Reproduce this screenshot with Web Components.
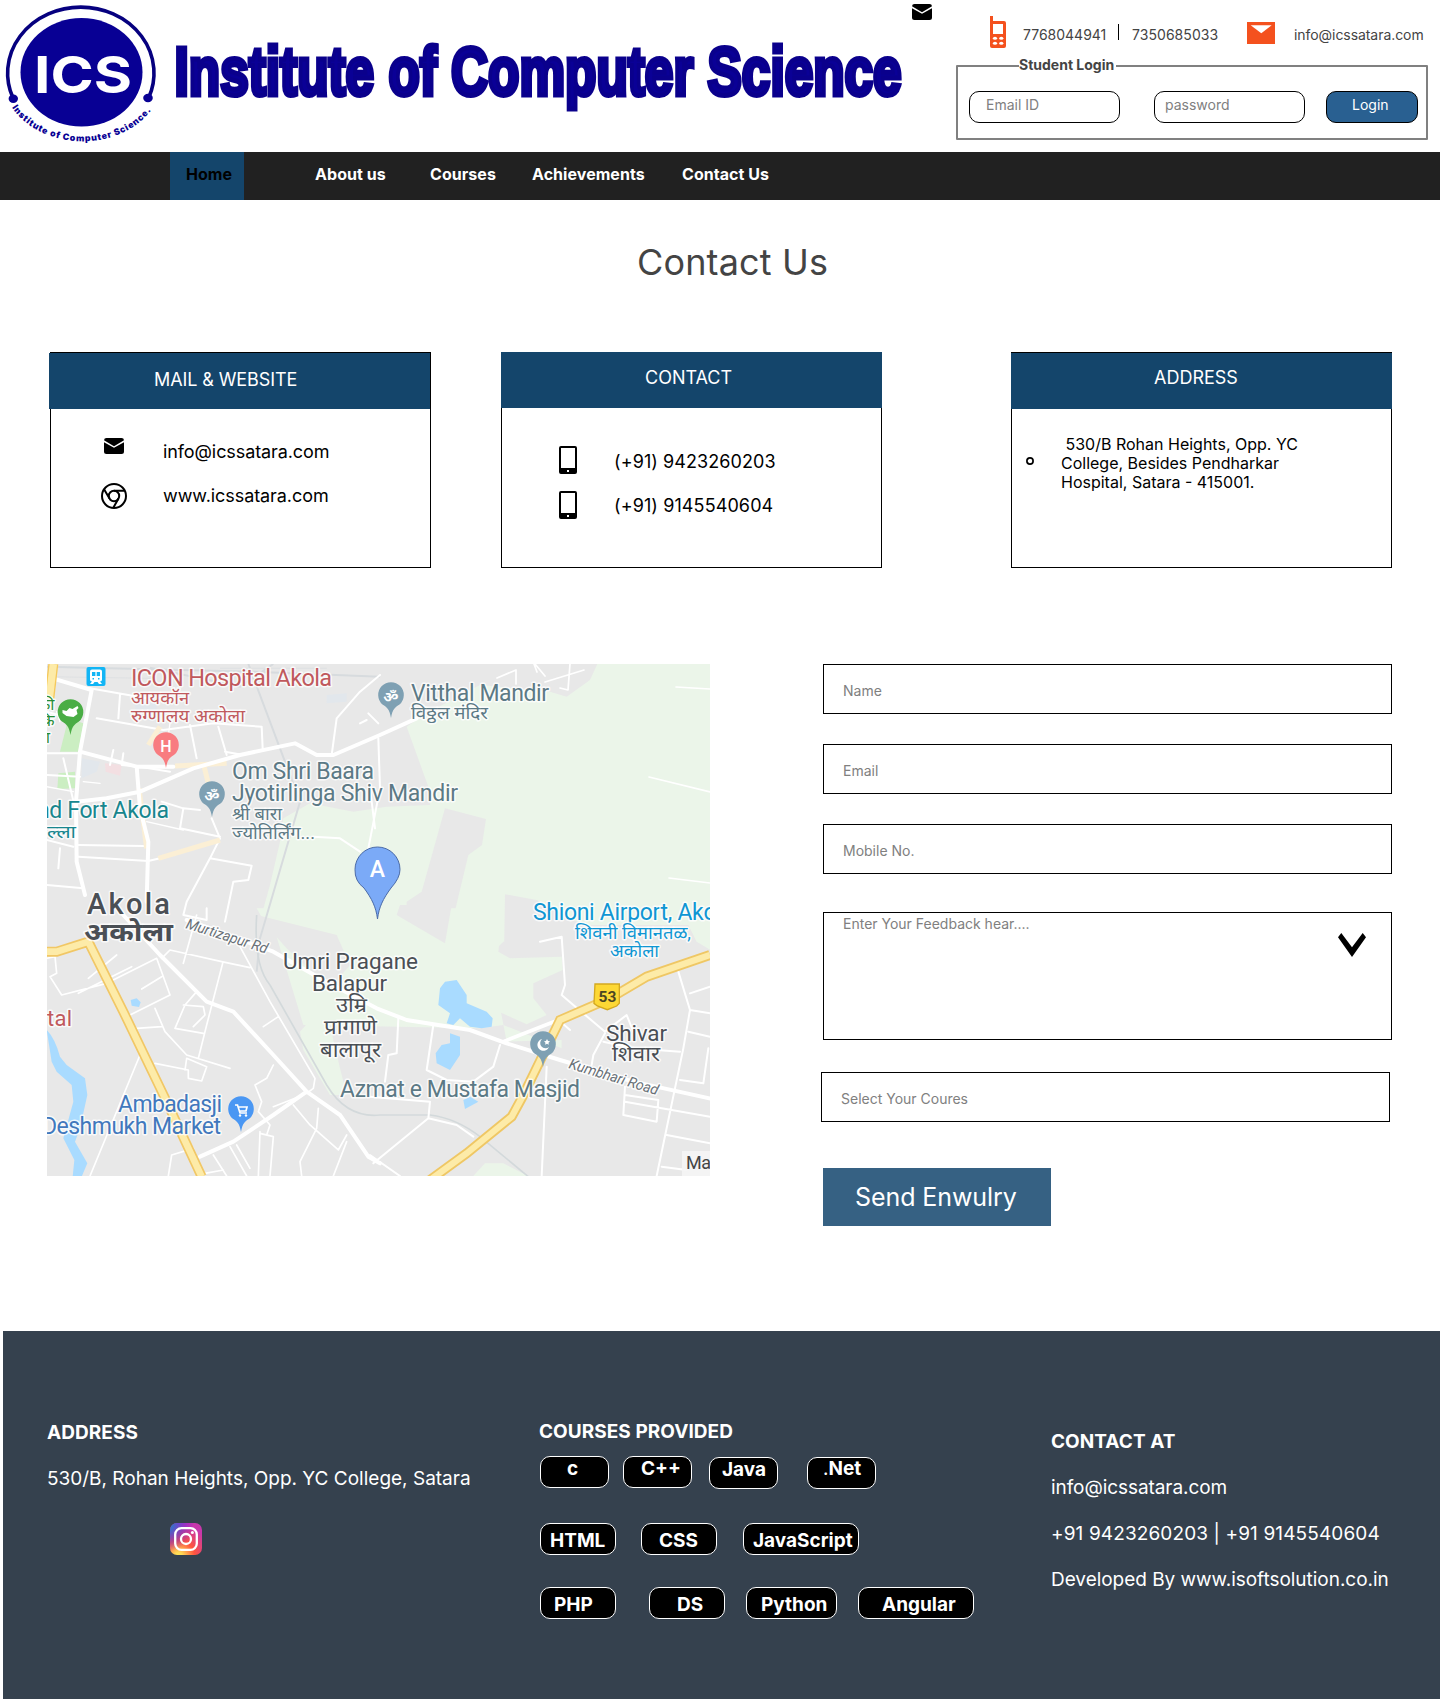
<!DOCTYPE html>
<html lang="en">
<head>
<meta charset="utf-8">
<title>Institute of Computer Science - Contact Us</title>
<style>
body{margin:0;width:1440px;height:1699px;overflow:hidden;background:#fff;font-family:Inter,"Liberation Sans",sans-serif;color:#000}
main{display:block;height:1131px}
h1{margin:0;padding:40px 0 0 637px;font-size:36px;line-height:44px;font-weight:400;color:#444;height:112px;white-space:nowrap;letter-spacing:.15px}
.cards{display:flex;padding-left:50px;height:312px}
.lower{display:flex;padding-left:47px}
.form{margin-left:113px;display:flex;flex-direction:column}
</style>
</head>
<body>
<ics-header></ics-header>
<ics-nav></ics-nav>
<main>
  <h1>Contact Us</h1>
  <div class="cards">
    <info-card style="--head-x:-2px;--title-x:105px;--title-y:53px">
      <span slot="title" style="letter-spacing:-.1px">MAIL &amp; WEBSITE</span>
      <card-row style="margin-top:29px;--pad:50px;--icon:26px;--gap:36px;--h:28px;letter-spacing:-.09px"><ics-icon slot="icon" name="mail"></ics-icon>info@icssatara.com</card-row>
      <card-row style="margin-top:17px;--pad:50px;--icon:26px;--gap:36px;--h:26px;letter-spacing:-.07px"><ics-icon slot="icon" name="chrome"></ics-icon>www.icssatara.com</card-row>
    </info-card>
    <info-card style="margin-left:70px;--head-x:-1px;--head-y:-1px;--title-x:144px;--title-y:51px">
      <span slot="title">CONTACT</span>
      <card-row style="margin-top:38px;--pad:57px;--icon:18px;--gap:37px;--h:28px;--dy:3px;letter-spacing:.08px"><ics-icon slot="icon" name="phone"></ics-icon>(+91) 9423260203</card-row>
      <card-row style="margin-top:17px;--pad:57px;--icon:18px;--gap:37px;--h:28px;--dy:1px;letter-spacing:.1px"><ics-icon slot="icon" name="phone"></ics-icon>(+91) 9145540604</card-row>
    </info-card>
    <info-card style="margin-left:129px;--head-x:-1px;--title-x:143px;--title-y:49px">
      <span slot="title">ADDRESS</span>
      <address-row>&nbsp;530/B Rohan Heights, Opp. YC<br>College, Besides Pendharkar<br>Hospital, Satara - 415001.</address-row>
    </info-card>
  </div>
  <div class="lower">
    <area-map></area-map>
    <div class="form">
      <form-field>Name</form-field>
      <form-field style="margin-top:30px">Email</form-field>
      <form-field style="margin-top:30px">Mobile No.</form-field>
      <form-field style="margin-top:38px;--h:128px;--lh:22px">Enter Your Feedback hear....<ics-icon slot="end" name="chevron"></ics-icon></form-field>
      <form-field style="margin:32px 0 0 -2px">Select Your Coures</form-field>
      <send-button>Send Enwulry</send-button>
    </div>
  </div>
</main>
<ics-footer></ics-footer>
<script>
const define = (name, html) => {
  const t = document.createElement('template');
  t.innerHTML = html;
  customElements.define(name, class extends HTMLElement {
    constructor() {
      super();
      this.attachShadow({mode: 'open'}).append(t.content.cloneNode(true));
    }
  });
};

const icons = {
  mail: `<svg width="20" height="16" viewBox="0 0 20 16"><path d="M2.5 0h15A2.5 2.5 0 0 1 20 2.3L10 8.3 0 2.3A2.5 2.5 0 0 1 2.5 0z"/><path d="M0 4.2l10 5.5 10-5.5v9.3a2.5 2.5 0 0 1-2.5 2.5h-15A2.5 2.5 0 0 1 0 13.500z"/></svg>`,
  chrome: `<svg width="26" height="26" viewBox="0 0 26 26" fill="none" stroke="#000" stroke-width="2"><circle cx="13" cy="13" r="12"/><circle cx="13" cy="13" r="5.2"/><path d="M13 7.8h10.6M8.5 15.6L3.2 6.4M17.5 15.6L12.3 24.8"/></svg>`,
  phone: `<svg width="18" height="28" viewBox="0 0 18 28"><path fill-rule="evenodd" d="M2 0h14a2 2 0 0 1 2 2v24a2 2 0 0 1-2 2H2a2 2 0 0 1-2-2V2a2 2 0 0 1 2-2zM2 2v20h14V2zM8 24v2h2v-2z"/></svg>`,
  chevron: `<svg width="28" height="24" viewBox="0 0 28 24"><path d="M3.3 0L14 14.2 24.7 0 28 4.3 14 24 0 4.3z"/></svg>`,
  cell: `<svg width="16" height="32" viewBox="0 0 16 32" fill="#f4511e"><path fill-rule="evenodd" d="M0 0h3v5h11a2 2 0 0 1 2 2v23a2 2 0 0 1-2 2H2a2 2 0 0 1-2-2zM3 8v10h10V8z"/><g fill="#fff"><ellipse cx="5" cy="22.3" rx="2.1" ry="1.5"/><ellipse cx="11.3" cy="22.3" rx="2.1" ry="1.5"/><ellipse cx="5" cy="27.3" rx="2.1" ry="1.5"/><ellipse cx="11.3" cy="27.3" rx="2.1" ry="1.5"/></g></svg>`,
  envelope: `<svg width="28" height="22" viewBox="0 0 28 22"><path fill="#f4511e" d="M0 0h28v22H0z"/><path fill="#fff" d="M3.7 3.2h21L14.3 11.2z"/></svg>`,
  instagram: `<svg width="32" height="32" viewBox="0 0 32 32"><defs><radialGradient id="a" cx=".27" cy="1.05" r="1"><stop offset="0" stop-color="#fd5"/><stop offset=".12" stop-color="#fd5"/><stop offset=".5" stop-color="#ff543e"/><stop offset="1" stop-color="#c837ab"/></radialGradient><radialGradient id="b" cx="-.1" cy=".05" r=".85"><stop offset="0" stop-color="#3771c8"/><stop offset=".2" stop-color="#3771c8"/><stop offset="1" stop-color="#60f" stop-opacity="0"/></radialGradient></defs><rect width="32" height="32" rx="7" fill="url(#a)"/><rect width="32" height="32" rx="7" fill="url(#b)"/><g fill="none" stroke="#fff" stroke-width="2.3"><rect x="5.2" y="5.2" width="21.6" height="21.6" rx="6.3"/><circle cx="16" cy="16" r="5"/></g><circle cx="22.4" cy="9.6" r="1.5" fill="#fff"/></svg>`
};
customElements.define('ics-icon', class extends HTMLElement {
  constructor() { super(); this.attachShadow({mode: 'open'}); }
  connectedCallback() {
    this.shadowRoot.innerHTML = `<style>:host{display:block;flex:none}svg{display:block}</style>` + icons[this.getAttribute('name')];
  }
});

define('ics-brand', `<style>:host{display:block;flex:none;width:905px;height:152px}svg{display:block}</style>
<svg width="905" height="152" viewBox="0 0 905 152">
  <ellipse cx="81.5" cy="72.3" rx="61" ry="54.3" fill="#080094"/>
  <path d="M13 98A73.2 66 0 1 1 148.6 98" fill="none" stroke="#06007f" stroke-width="3.6"/>
  <ellipse cx="13.3" cy="98.7" rx="4.7" ry="4.2" fill="#080094"/><ellipse cx="148" cy="98" rx="4.8" ry="4.2" fill="#080094"/>
  <text x="34" y="93" font-family="Inter" font-weight="700" font-size="51" fill="#fff" textLength="98" lengthAdjust="spacingAndGlyphs">ICS</text>
  <path id="arc" d="M12 107.500A80 64 0 0 0 155 104.500" fill="none"/>
  <text font-family="Inter" font-weight="900" font-size="8.800" fill="#080094"><textPath href="#arc" textLength="159">Institute of Computer Science.</textPath></text>
  <text x="174.600" y="95.200" font-family="Liberation Sans" font-weight="700" font-size="68.500" fill="#0a0096" stroke="#0a008c" stroke-width="5" textLength="727" lengthAdjust="spacingAndGlyphs">Institute of Computer Science</text>
</svg>`);

define('login-box', `<style>
:host{display:flex;position:relative;box-sizing:border-box;width:472px;height:75px;border:2px solid #808080;border-radius:1px;padding:24px 0 0 11px;font-size:14px;color:#808080}
.legend{position:absolute;left:61px;top:-11px;width:97px;background:#fff;line-height:18px;font-weight:700;color:#444;white-space:nowrap;height:18px}
.box{box-sizing:border-box;width:151px;height:32px;border:1px solid #000;border-radius:10px;line-height:26px;background:#fff;white-space:nowrap}
.btn{width:92px;background:#296091;color:#fff;margin-left:21px;padding-left:25px}
</style><div class="legend">Student Login</div>
<div class="box" style="padding-left:16px">Email ID</div><div class="box" style="margin-left:34px;padding-left:10px">password</div><div class="box btn">Login</div>`);

define('ics-header', `<style>
:host{display:flex;height:152px;background:#fff}
.side{margin-left:24px;width:472px}
.contact{display:flex;height:65px;padding-left:34px;box-sizing:border-box;font-size:14px;color:#444;line-height:20px;white-space:nowrap}
.contact span{margin-top:25px}
i{display:block;width:1px;height:16px;background:#000;margin-top:24px}
</style><ics-brand></ics-brand><ics-icon name="mail" style="margin:4px 0 0 7px"></ics-icon>
<div class="side"><div class="contact">
<ics-icon name="cell" style="margin-top:16px"></ics-icon><span style="width:95px;margin-left:17px">7768044941</span><i></i><span style="width:115px;margin-left:13px;letter-spacing:.05px">7350685033</span>
<ics-icon name="envelope" style="margin-top:22px"></ics-icon><span style="margin-left:19px;letter-spacing:-.06px">info@icssatara.com</span></div>
<login-box></login-box></div>`);

define('ics-nav', `<style>
:host{display:flex;height:48px;background:#212121;color:#fff;font-size:16px;font-weight:700;line-height:45px;white-space:nowrap;letter-spacing:.05px}
span{display:block;flex:none;box-sizing:border-box}
.on{margin-left:170px;width:74px;padding-left:16px;background:#14456b;color:#000}
</style><span class="on">Home</span><span style="margin-left:71px;width:115px">About us</span><span style="width:102px">Courses</span><span style="width:150px">Achievements</span><span>Contact Us</span>`);

define('info-card', `<style>
:host{display:block;flex:none;box-sizing:border-box;width:381px;height:216px;border:1px solid #000}
.head{width:381px;height:56px;margin-left:var(--head-x);margin-top:var(--head-y,0);background:#14456b;color:#fff;font-size:18px;line-height:var(--title-y);padding-left:var(--title-x);box-sizing:border-box;white-space:nowrap}
.body{display:flow-root}
</style><div class="head"><slot name="title"></slot></div><div class="body"><slot></slot></div>`);

define('card-row', `<style>
:host{display:flex;height:var(--h);padding-left:var(--pad);font-size:18px;line-height:var(--h);white-space:nowrap}
.icon{width:var(--icon);margin-right:var(--gap);display:flex;justify-content:center;flex:none;align-items:flex-start}
.text{padding-top:0;margin-top:calc(var(--dy,0px)/2)}
</style><div class="icon"><slot name="icon"></slot></div><div class="text"><slot></slot></div>`);

define('address-row', `<style>
:host{display:flex;margin-top:26px;padding-left:14px;font-size:16px;line-height:19.2px;white-space:nowrap}
svg{display:block;margin:22px 27px 0 0}
</style><svg width="8" height="8" viewBox="0 0 8 8"><circle cx="4" cy="4" r="3.1" fill="none" stroke="#000" stroke-width="1.7"/></svg><div><slot></slot></div>`);

define('form-field', `<style>
:host{display:flex;justify-content:space-between;box-sizing:border-box;width:569px;height:var(--h,50px);border:1px solid #000;padding:0 25px 0 19px;font-size:14px;line-height:var(--lh,52.6px);color:#808080;white-space:nowrap}
::slotted(ics-icon){margin-top:20px}
</style><div><slot></slot></div><slot name="end"></slot>`);

define('send-button', `<style>:host{display:block;margin-top:46px;box-sizing:border-box;width:228px;height:58px;background:#366183;color:#fff;font-size:25px;line-height:58px;padding-left:32px;white-space:nowrap;letter-spacing:-.08px}</style><slot></slot>`);

define('course-chip', `<style>
:host{display:block;flex:none;box-sizing:border-box;width:var(--w);height:32px;border:1px solid #fff;border-radius:10px;background:#000;color:#fff;font-weight:700;font-size:19px;white-space:nowrap}
div{line-height:30px;margin:var(--dy,2px) 0 0 var(--x)}
</style><div><slot></slot></div>`);

define('ics-footer', `<style>
:host{display:flex;box-sizing:border-box;height:368px;margin-left:3px;padding:89px 0 0 44px;background:#35414e;color:#fff;font-size:19px;line-height:24px;white-space:nowrap}
section{flex:none} b{display:block;font-weight:700;letter-spacing:.05px}
.row{display:flex;height:32px;padding-left:1px}
p{margin:22px 0 0}
</style>
<section style="width:492px;padding-top:1px"><b>ADDRESS</b><p>530/B, Rohan Heights, Opp. YC College, Satara</p><ics-icon name="instagram" style="margin:32px 0 0 123px"></ics-icon></section>
<section style="width:512px"><b>COURSES PROVIDED</b>
<div class="row" style="margin-top:12px"><course-chip style="--w:69px;--x:26px;--dy:-3px">c</course-chip><course-chip style="margin-left:14px;--w:69px;--x:17px;--dy:-3px">C++</course-chip><course-chip style="margin:1px 0 0 17px;--w:69px;--x:12px;--dy:-3px">Java</course-chip><course-chip style="margin:1px 0 0 29px;--w:69px;--x:15px;--dy:-4px"><span style="font-weight:400">.</span>Net</course-chip></div>
<div class="row" style="margin-top:35px"><course-chip style="--w:76px;--x:9px">HTML</course-chip><course-chip style="margin-left:25px;--w:76px;--x:17px">CSS</course-chip><course-chip style="margin-left:26px;--w:116px;--x:9px">JavaScript</course-chip></div>
<div class="row" style="margin-top:32px"><course-chip style="--w:76px;--x:13px">PHP</course-chip><course-chip style="margin-left:33px;--w:76px;--x:27px">DS</course-chip><course-chip style="margin-left:21px;--w:91px;--x:14px">Python</course-chip><course-chip style="margin-left:21px;--w:116px;--x:23px">Angular</course-chip></div>
</section>
<section style="padding-top:10px"><b>CONTACT AT</b><p style="letter-spacing:-.07px">info@icssatara.com</p><p style="letter-spacing:.12px">+91 9423260203 | +91 9145540604</p><p style="letter-spacing:-.03px">Developed By www.isoftsolution.co.in</p></section>`);

const pin = (x, y, c, inner) => `<g transform="translate(${x} ${y})"><path d="M0 22C-1.500 13-4 11.500-8.500 8.500A12.800 12.800 0 1 1 8.500 8.500C4 11.500 1.500 13 0 22z" fill="${c}"/>${inner}</g>`;
define('area-map', `<style>:host{display:block;flex:none;width:663px;height:512px}svg{display:block}
text{font-family:Roboto,"Noto Sans Devanagari","Noto Sans",sans-serif;paint-order:stroke;stroke:#fff;stroke-width:3px;stroke-opacity:.8;stroke-linejoin:round}
.p{stroke:none;fill:#fff}
.road{fill:none;stroke:#fff;stroke-linejoin:round;stroke-linecap:round}
</style>
<svg width="663" height="512" viewBox="47 664 663 512">
<rect x="47" y="664" width="663" height="512" fill="#e8e8e8"/>
<g transform="translate(370 655) scale(.33333)" fill="#ebf5e9">
  <path d="M682 27H1030V840L400 860 360 900 410 1160 575 1155V1180L400 1110 330 1120 -200 1110 -300 780 -325 780 -300 690 -270 560 -260 490 -180 445 -50 470 50 455 180 450 175 395 110 215 160 180 330 90 540 110 590 125 660 75z"/>
  <path d="M225 460L348 492 336 570 295 600 240 830H110V740L155 710z" fill="#e8e8e8"/>
  <path d="M405 718L500 735 640 810H1040V1020H400z" fill="#e8e8e8"/>
</g>
<g transform="translate(370 915) scale(.33333)" fill="#ebf5e9">
  <path d="M-340-20H400L385 110 420 130 575 125 578 165 490 205 490 250 530 300 470 328 320 260 180 320 0 275-75 255-130 290-90 460-70 540-120 540-200 405-210 350-170 305-215 255-165 170-60 110-90 65-320 15z"/>
  <path d="M80 0L225 85 245-30H90z" fill="#e8e8e8"/><path d="M-340 0L-100 60-60 150-120 220-250 100z" fill="#e8e8e8"/>
  <path d="M310 783L345 745 400 745 475 783zM940 0H1030V110L980 80z"/>
</g>
<g transform="translate(40 655) scale(.33333)">
  <path d="M85 190L130 205 115 290H60zM55 355L105 350V400L52 402z" fill="#cbeec2"/>
  <path d="M125 310L180 320 170 350 125 370zM860 120L920 115V140L860 145zM280 120L350 140 350 200 290 190z" fill="#e2e7ec"/>
  <path d="M195 325L245 330 240 362 197 350z" fill="#f3dfe2"/>
  <path d="M20 35L330 43 640 50 1020 65M330 38L600 95 700 27M625 27L780 440 660 850 650 950" fill="none" stroke="#d7dbde" stroke-width="6"/>
  <path d="M20 65L330 70M540 40H860" fill="none" stroke="#dadde0" stroke-width="2"/>
  <g class="road" stroke-width="6">
    <path d="M150 100L320 130M240 120L235 190M170 190L370 225 520 205 665 215 668 280M450 210L470 310M535 215L560 300M555 290L610 300M20 295L120 295M20 170L75 185M120 365L20 360M115 570L310 573M115 605L325 618 360 610M365 440L430 460 420 520 540 545M430 460L480 465M515 490L540 550 510 610 440 740 430 780 500 795 500 760M510 610L635 632 625 675 580 680 555 800M220 285L210 330M70 310L110 480M20 555L100 575M60 580L55 640M20 690L130 700"/>
    <path d="M1020 60L960 110 890 190 875 300M1015 250L1020 400 985 580M990 400L1005 520M820 545L900 550 960 590M960 205L980 195M985 175L1015 205"/>
    <path d="M250 295L245 330 300 335 390 350"/>
  </g>
  <g class="road" stroke-width="4"><path d="M20 395L100 410M130 380L180 385M320 500L430 525M50 170L60 200M390 205L385 240"/></g>
  <g fill="none" stroke="#fbefd5" stroke-width="15"><path d="M360 215L325 270M405 333L560 325M490 325L505 385M297 400L320 580M355 610L540 555"/></g>
  <g class="road" stroke-width="12"><path d="M20 65L155 105 120 290 108 440 110 620 135 720M120 290L290 335 400 335M290 335L300 460 325 560 320 740M110 440L200 430 300 410 460 340 600 300 765 265 830 300H880L1020 240 1130 190"/></g>
  <path d="M40 27L28 130" stroke="#f5c95b" stroke-width="30"/><path d="M40 27L28 130" stroke="#fdeba8" stroke-width="22"/>
</g>
<g transform="translate(40 915) scale(.33333)">
  <path d="M20 345Q45 370 60 425L80 450 135 490 142 540 120 640 105 680 142 745 125 785H98L103 735 70 670 100 560 95 510 50 470 35 440z" fill="#a9dbff"/>
  <path d="M272 255L290 250 302 262 297 276 275 272z" fill="#a9dbff"/>
  <path d="M650 0Q640 150 690 210L860 510Q920 610 1020 600H1170Q1250 610 1320 665L1465 785" fill="none" stroke="#d3d9db" stroke-width="5"/>
  <g class="road" stroke-width="5">
    <path d="M20 130L45 125 50 175 30 185 65 240 200 205 350 130 390 240 270 300M145 190L230 120M115 235L275 155M365 130L390 105 545 140 630 158M305 222L365 185M345 280L375 350 440 420 570 460M290 340L365 335M300 420L150 783M345 445L445 465 445 490 485 498 500 455 440 430 435 465M470 0L430 145M470 230L435 270 405 340 490 355M430 270L490 275 495 300 460 335M548 145L500 330 475 430M600 95L690 260 825 490 820 520 800 535M715 305L670 335M700 450L680 490 645 510 665 560 655 590 690 630 680 660M700 575L790 540M760 570L810 630 895 705 920 660M835 580L830 640 780 740 785 783M385 783L395 720 460 700M520 720L560 783M570 695L620 783M590 690L630 760M660 650L655 783M660 655L700 665 690 783M920 680L880 783M495 775L550 765"/>
  </g>
  <g class="road" stroke-width="12"><path d="M250 0L360 120 500 260 580 290 700 420 800 530 900 600 985 725 1020 745M480 725L580 680 700 600 800 530M440 15L700 110 840 190 1010 280 1100 315 1290 345 1400 385 1560 435 1780 500 2030 555"/></g>
  <path d="M20 110H50L145 80 250 290 380 560 485 785" fill="none" stroke="#f1c765" stroke-width="30"/><path d="M20 110H50L145 80 250 290 380 560 485 785" fill="none" stroke="#fdeba8" stroke-width="20"/>
</g>
<g transform="translate(370 915) scale(.33333)">
  <path d="M225 200L260 195 290 240V265L350 290 368 310 365 335 335 340 300 335 270 310 250 330 230 325 240 295 205 270 210 220zM240 355L270 365V420L240 465 200 445 197 415 215 390 240 385zM300 545L325 560 285 582 280 555z" fill="#a9dbff"/>
  <g class="road" stroke-width="6">
    <path d="M510 80L575 65 585 210 575 240 610 270 705 350 770 300 790 350M705 355L670 420 665 450M700 380L790 400 930 410M600 345L560 310M85 310L80 415 55 420 45 500M190 330L170 465 230 495 310 500 370 455 390 390M0 545L180 560 175 610 10 745M175 610L260 630 310 665M925 170L960 285 940 400 860 783M960 235L1020 215M960 285L1020 295M955 350L1020 365M930 495L1000 505 1015 400M765 515L760 600 860 620 865 555 765 540M765 560L1020 605M890 660L1020 685M875 755L950 765M530 455L515 783M0 720L90 783"/>
  </g>
  <path class="road" d="M400 380L565 315" stroke-width="11"/>
  <path d="M180 795L290 715 425 605 455 550 570 315 720 250 830 185 1020 120" fill="none" stroke="#efc764" stroke-width="30"/><path d="M180 795L290 715 425 605 455 550 570 315 720 250 830 185 1020 120" fill="none" stroke="#fdeba8" stroke-width="19"/>
  <path d="M675 207H748V265L740 273 712 284 682 273 672 265z" fill="#fdd835" stroke="#d3a81f" stroke-width="4"/>
</g>
<g class="road" stroke-width="1.700"><path d="M676 687L710 689M649 777L710 792M669 878L710 883M535 664L545 676M570 664L568 690 560 688M497 678L516 670V684M534 664L537 672 M584 670L545 682"/></g>
<g fill="#c0595d" font-size="23.500"><text x="131" y="686" textLength="201">ICON Hospital Akola</text><g font-size="17.500"><text x="131" y="704" textLength="58" lengthAdjust="spacingAndGlyphs">आयकॉन</text><text x="131" y="722" textLength="114" lengthAdjust="spacingAndGlyphs">रुग्णालय अकोला</text></g><text x="47" y="1026" font-size="22" textLength="25">tal</text></g>
<g fill="#5c7985"><text x="411" y="701" font-size="23" textLength="138">Vitthal Mandir</text><text x="411" y="719" font-size="17.500" textLength="77" lengthAdjust="spacingAndGlyphs">विठ्ठल मंदिर</text>
<text x="232" y="779" font-size="23" textLength="142">Om Shri Baara</text><text x="232" y="801" font-size="23" textLength="226">Jyotirlinga Shiv Mandir</text><text x="232" y="820" font-size="17.500" textLength="50" lengthAdjust="spacingAndGlyphs">श्री बारा</text><text x="232" y="839" font-size="17.500" textLength="83" lengthAdjust="spacingAndGlyphs">ज्योतिर्लिंग...</text>
<text x="340" y="1097" font-size="23" textLength="240">Azmat e Mustafa Masjid</text></g>
<g fill="#17868e"><text x="37" y="818" font-size="23" textLength="132">nd Fort Akola</text><text x="47" y="838" font-size="17.500" textLength="29" lengthAdjust="spacingAndGlyphs">ल्ला</text></g>
<g fill="#278d36" font-size="16"><text x="38" y="710">की</text><text x="38" y="726">कि</text><text x="41" y="743">ग</text></g>
<g fill="#4a4f55"><text x="87" y="914" font-size="29" font-weight="500" textLength="83">Akola</text><text x="84" y="941" font-size="25" font-weight="700" textLength="89" lengthAdjust="spacingAndGlyphs">अकोला</text>
<text x="283" y="969" font-size="22.500" textLength="135">Umri Pragane</text><text x="312" y="991" font-size="22.500" textLength="75">Balapur</text><g font-size="20"><text x="336" y="1012" textLength="31" lengthAdjust="spacingAndGlyphs">उम्रि</text><text x="324" y="1034" textLength="53" lengthAdjust="spacingAndGlyphs">प्रागाणे</text><text x="320" y="1057" textLength="61" lengthAdjust="spacingAndGlyphs">बालापूर</text></g>
<text x="606" y="1041" font-size="22.500" textLength="61">Shivar</text><text x="612" y="1061" font-size="20" textLength="48" lengthAdjust="spacingAndGlyphs">शिवार</text></g>
<g fill="#0f96d3"><text x="533" y="920" font-size="23" textLength="201">Shioni Airport, Akola</text><text x="575" y="939" font-size="17.500" textLength="116" lengthAdjust="spacingAndGlyphs">शिवनी विमानतळ,</text><text x="610" y="957" font-size="17.500" textLength="49" lengthAdjust="spacingAndGlyphs">अकोला</text></g>
<g fill="#4178bd"><text x="118" y="1112" font-size="23" textLength="104">Ambadasji</text><text x="42" y="1134" font-size="23" textLength="179">Deshmukh Market</text></g>
<g fill="#687077" font-size="14.500" font-style="italic"><text transform="translate(185 928) rotate(17.500)" textLength="85">Murtizapur Rd</text><text transform="translate(568 1068) rotate(17)" textLength="93">Kumbhari Road</text></g>
<text x="607.500" y="1002" text-anchor="middle" style="stroke:none" font-size="15.500" font-weight="700" fill="#4b4523">53</text>
${pin(166, 746, '#f87c80', '<text class="p" x="0" y="6" text-anchor="middle" font-size="16" font-weight="500">H</text>')}
${pin(212, 795, '#7ea0b3', '<text class="p" x="0" y="6" text-anchor="middle" font-size="15" font-weight="700">ॐ</text>')}
${pin(391, 696, '#7ea0b3', '<text class="p" x="0" y="6" text-anchor="middle" font-size="15" font-weight="700">ॐ</text>')}
${pin(543, 1045, '#7ea0b3', '<path d="M-1-6A6 6 0 1 0 6 2 5 5 0 1 1-1-6zM4-6l1 2 2 .3-1.500 1.500.3 2-1.800-1-1.900 1 .4-2L1-3.700 3-4z" fill="#fff"/>')}
${pin(241, 1110, '#4a97f3', '<path d="M-6-5h2.500L-1 3h7M-3-3h9L5 1h-7" fill="none" stroke="#fff" stroke-width="1.700"/><circle cx="-1" cy="5.500" r="1.200" fill="#fff"/><circle cx="5" cy="5.500" r="1.200" fill="#fff"/>')}
${pin(70.5, 713, '#4aad45', '<path d="M-8-3l4 1 3-3 3 1 5-3 1 2-2 2 1 4-4 3-7-1-4-3z" fill="#fff"/>')}
<path d="M377.500 919C376 907 372 899 364 888A22 22 0 0 1 355 869.500 22.500 22.500 0 0 1 400 869.500Q400 878 391 888C383 899 379 907 377.500 919z" fill="#7baaf7" stroke="#4b6ba8"/>
<text class="p" x="377.500" y="876.500" text-anchor="middle" font-size="23" font-weight="500">A</text>
<rect x="86.500" y="667" width="19" height="19" rx="2" fill="#12b5f5"/><path fill-rule="evenodd" d="M92 669.500h8a2 2 0 0 1 2 2v8a2 2 0 0 1-2 2l2 2.500h-3l-1.500-2h-3l-1.500 2h-3l2-2.500a2 2 0 0 1-2-2v-8a2 2 0 0 1 2-2zM92 672v4h3.400v-4zM96.700 672v4H100v-4zM92.500 678v1.500H94V678zM98 678v1.500h1.500V678z" fill="#fff"/>
<rect x="682" y="1151" width="28" height="25" fill="#f5f5f5" fill-opacity=".9"/><text x="686" y="1169" font-size="18" fill="#444" style="stroke:none" textLength="25">Ma</text>
</svg>`);
</script>
</body>
</html>
